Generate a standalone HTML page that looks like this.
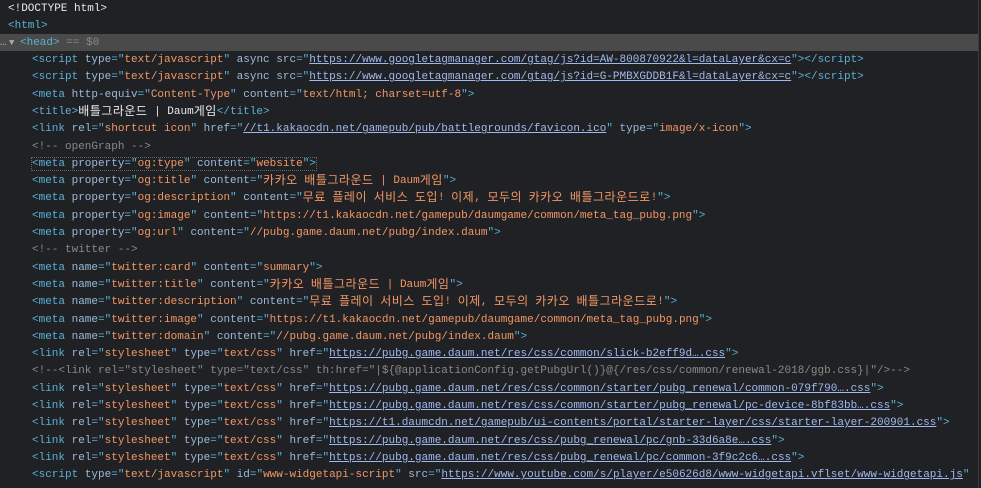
<!DOCTYPE html>
<html><head><meta charset="utf-8">
<style>
html,body{margin:0;padding:0;background:#202124;width:981px;height:488px;overflow:hidden}
body{font-family:"Liberation Mono","Noto Sans CJK KR",monospace;font-size:11px;color:#e8eaed;position:relative}
.l{position:absolute;left:0;height:17px;line-height:19px;white-space:pre;width:978px}
.t{color:#5db0d7}.n{color:#9bbbdc}.v{color:#f29766}.c{color:#898989}.w{color:#e8eaed}
.u{color:#9fb9ee;text-decoration:underline}
.k{font-family:"Noto Sans CJK KR",sans-serif;font-size:12px;line-height:12px;letter-spacing:0.5px;position:relative;top:1px}
.sel{background:#4a4a4a}
.vl{position:absolute;left:978px;top:0;width:1px;height:488px;background:#3c3c3c}
</style></head><body>
<div class="vl"></div>
<div class="l" style="top:0;padding-left:8px"><span class="w">&lt;!DOCTYPE html&gt;</span></div>
<div class="l t" style="top:17px;padding-left:8px">&lt;html&gt;</div>
<div class="l sel" style="top:34px"><span style="color:#aaa;position:absolute;left:0">…</span><span style="color:#aaa;position:absolute;left:9px;font-size:9px">▼</span><span style="position:absolute;left:20px"><span class="t">&lt;head&gt;</span><span class="c"> == $0</span></span></div>
<div class="l" style="top:51px;padding-left:32px"><span class="t">&lt;script </span><span class="n">type</span><span class="t">="</span><span class="v">text/javascript</span><span class="t">" </span><span class="n">async src</span><span class="t">="</span><span class="u">https://www.googletagmanager.com/gtag/js?id=AW-800870922&amp;l=dataLayer&amp;cx=c</span><span class="t">"&gt;&lt;/script&gt;</span></div>
<div class="l" style="top:68.3px;padding-left:32px"><span class="t">&lt;script </span><span class="n">type</span><span class="t">="</span><span class="v">text/javascript</span><span class="t">" </span><span class="n">async src</span><span class="t">="</span><span class="u">https://www.googletagmanager.com/gtag/js?id=G-PMBXGDDB1F&amp;l=dataLayer&amp;cx=c</span><span class="t">"&gt;&lt;/script&gt;</span></div>
<div class="l" style="top:85.6px;padding-left:32px"><span class="t">&lt;meta </span><span class="n">http-equiv</span><span class="t">="</span><span class="v">Content-Type</span><span class="t">" </span><span class="n">content</span><span class="t">="</span><span class="v">text/html; charset=utf-8</span><span class="t">"&gt;</span></div>
<div class="l" style="top:102.9px;padding-left:32px"><span class="t">&lt;title&gt;</span><span class="w"><span class="k">배틀그라운드</span> | Daum<span class="k">게임</span></span><span class="t">&lt;/title&gt;</span></div>
<div class="l" style="top:120.2px;padding-left:32px"><span class="t">&lt;link </span><span class="n">rel</span><span class="t">="</span><span class="v">shortcut icon</span><span class="t">" </span><span class="n">href</span><span class="t">="</span><span class="u">//t1.kakaocdn.net/gamepub/pub/battlegrounds/favicon.ico</span><span class="t">" </span><span class="n">type</span><span class="t">="</span><span class="v">image/x-icon</span><span class="t">"&gt;</span></div>
<div class="l c" style="top:137.5px;padding-left:32px">&lt;!-- openGraph --&gt;</div>
<div class="l" style="top:154.8px;padding-left:32px"><span style="outline:1px dotted #666"><span class="t">&lt;meta </span><span class="n">property</span><span class="t">="</span><span class="v">og:type</span><span class="t">" </span><span class="n">content</span><span class="t">="</span><span class="v">website</span><span class="t">"&gt;</span></span></div>
<div class="l" style="top:172.1px;padding-left:32px"><span class="t">&lt;meta </span><span class="n">property</span><span class="t">="</span><span class="v">og:title</span><span class="t">" </span><span class="n">content</span><span class="t">="</span><span class="v"><span class="k">카카오</span> <span class="k">배틀그라운드</span> | Daum<span class="k">게임</span></span><span class="t">"&gt;</span></div>
<div class="l" style="top:189.4px;padding-left:32px"><span class="t">&lt;meta </span><span class="n">property</span><span class="t">="</span><span class="v">og:description</span><span class="t">" </span><span class="n">content</span><span class="t">="</span><span class="v"><span class="k">무료</span> <span class="k">플레이</span> <span class="k">서비스</span> <span class="k">도입</span>! <span class="k">이제</span>, <span class="k">모두의</span> <span class="k">카카오</span> <span class="k">배틀그라운드로</span>!</span><span class="t">"&gt;</span></div>
<div class="l" style="top:206.7px;padding-left:32px"><span class="t">&lt;meta </span><span class="n">property</span><span class="t">="</span><span class="v">og:image</span><span class="t">" </span><span class="n">content</span><span class="t">="</span><span class="v">https://t1.kakaocdn.net/gamepub/daumgame/common/meta_tag_pubg.png</span><span class="t">"&gt;</span></div>
<div class="l" style="top:224px;padding-left:32px"><span class="t">&lt;meta </span><span class="n">property</span><span class="t">="</span><span class="v">og:url</span><span class="t">" </span><span class="n">content</span><span class="t">="</span><span class="v">//pubg.game.daum.net/pubg/index.daum</span><span class="t">"&gt;</span></div>
<div class="l c" style="top:241.3px;padding-left:32px">&lt;!-- twitter --&gt;</div>
<div class="l" style="top:258.6px;padding-left:32px"><span class="t">&lt;meta </span><span class="n">name</span><span class="t">="</span><span class="v">twitter:card</span><span class="t">" </span><span class="n">content</span><span class="t">="</span><span class="v">summary</span><span class="t">"&gt;</span></div>
<div class="l" style="top:275.9px;padding-left:32px"><span class="t">&lt;meta </span><span class="n">name</span><span class="t">="</span><span class="v">twitter:title</span><span class="t">" </span><span class="n">content</span><span class="t">="</span><span class="v"><span class="k">카카오</span> <span class="k">배틀그라운드</span> | Daum<span class="k">게임</span></span><span class="t">"&gt;</span></div>
<div class="l" style="top:293.2px;padding-left:32px"><span class="t">&lt;meta </span><span class="n">name</span><span class="t">="</span><span class="v">twitter:description</span><span class="t">" </span><span class="n">content</span><span class="t">="</span><span class="v"><span class="k">무료</span> <span class="k">플레이</span> <span class="k">서비스</span> <span class="k">도입</span>! <span class="k">이제</span>, <span class="k">모두의</span> <span class="k">카카오</span> <span class="k">배틀그라운드로</span>!</span><span class="t">"&gt;</span></div>
<div class="l" style="top:310.5px;padding-left:32px"><span class="t">&lt;meta </span><span class="n">name</span><span class="t">="</span><span class="v">twitter:image</span><span class="t">" </span><span class="n">content</span><span class="t">="</span><span class="v">https://t1.kakaocdn.net/gamepub/daumgame/common/meta_tag_pubg.png</span><span class="t">"&gt;</span></div>
<div class="l" style="top:327.8px;padding-left:32px"><span class="t">&lt;meta </span><span class="n">name</span><span class="t">="</span><span class="v">twitter:domain</span><span class="t">" </span><span class="n">content</span><span class="t">="</span><span class="v">//pubg.game.daum.net/pubg/index.daum</span><span class="t">"&gt;</span></div>
<div class="l" style="top:345.1px;padding-left:32px"><span class="t">&lt;link </span><span class="n">rel</span><span class="t">="</span><span class="v">stylesheet</span><span class="t">" </span><span class="n">type</span><span class="t">="</span><span class="v">text/css</span><span class="t">" </span><span class="n">href</span><span class="t">="</span><span class="u">https://pubg.game.daum.net/res/css/common/slick-b2eff9d….css</span><span class="t">"&gt;</span></div>
<div class="l c" style="top:362.4px;padding-left:32px">&lt;!--&lt;link rel="stylesheet" type="text/css" th:href="|${@applicationConfig.getPubgUrl()}@{/res/css/common/renewal-2018/ggb.css}|"/&gt;--&gt;</div>
<div class="l" style="top:379.7px;padding-left:32px"><span class="t">&lt;link </span><span class="n">rel</span><span class="t">="</span><span class="v">stylesheet</span><span class="t">" </span><span class="n">type</span><span class="t">="</span><span class="v">text/css</span><span class="t">" </span><span class="n">href</span><span class="t">="</span><span class="u">https://pubg.game.daum.net/res/css/common/starter/pubg_renewal/common-079f790….css</span><span class="t">"&gt;</span></div>
<div class="l" style="top:397px;padding-left:32px"><span class="t">&lt;link </span><span class="n">rel</span><span class="t">="</span><span class="v">stylesheet</span><span class="t">" </span><span class="n">type</span><span class="t">="</span><span class="v">text/css</span><span class="t">" </span><span class="n">href</span><span class="t">="</span><span class="u">https://pubg.game.daum.net/res/css/common/starter/pubg_renewal/pc-device-8bf83bb….css</span><span class="t">"&gt;</span></div>
<div class="l" style="top:414.3px;padding-left:32px"><span class="t">&lt;link </span><span class="n">rel</span><span class="t">="</span><span class="v">stylesheet</span><span class="t">" </span><span class="n">type</span><span class="t">="</span><span class="v">text/css</span><span class="t">" </span><span class="n">href</span><span class="t">="</span><span class="u">https://t1.daumcdn.net/gamepub/ui-contents/portal/starter-layer/css/starter-layer-200901.css</span><span class="t">"&gt;</span></div>
<div class="l" style="top:431.6px;padding-left:32px"><span class="t">&lt;link </span><span class="n">rel</span><span class="t">="</span><span class="v">stylesheet</span><span class="t">" </span><span class="n">type</span><span class="t">="</span><span class="v">text/css</span><span class="t">" </span><span class="n">href</span><span class="t">="</span><span class="u">https://pubg.game.daum.net/res/css/pubg_renewal/pc/gnb-33d6a8e….css</span><span class="t">"&gt;</span></div>
<div class="l" style="top:448.9px;padding-left:32px"><span class="t">&lt;link </span><span class="n">rel</span><span class="t">="</span><span class="v">stylesheet</span><span class="t">" </span><span class="n">type</span><span class="t">="</span><span class="v">text/css</span><span class="t">" </span><span class="n">href</span><span class="t">="</span><span class="u">https://pubg.game.daum.net/res/css/pubg_renewal/pc/common-3f9c2c6….css</span><span class="t">"&gt;</span></div>
<div class="l" style="top:466.2px;padding-left:32px"><span class="t">&lt;script </span><span class="n">type</span><span class="t">="</span><span class="v">text/javascript</span><span class="t">" </span><span class="n">id</span><span class="t">="</span><span class="v">www-widgetapi-script</span><span class="t">" </span><span class="n">src</span><span class="t">="</span><span class="u">https://www.youtube.com/s/player/e50626d8/www-widgetapi.vflset/www-widgetapi.js</span><span class="t">"</span></div>
</body></html>
